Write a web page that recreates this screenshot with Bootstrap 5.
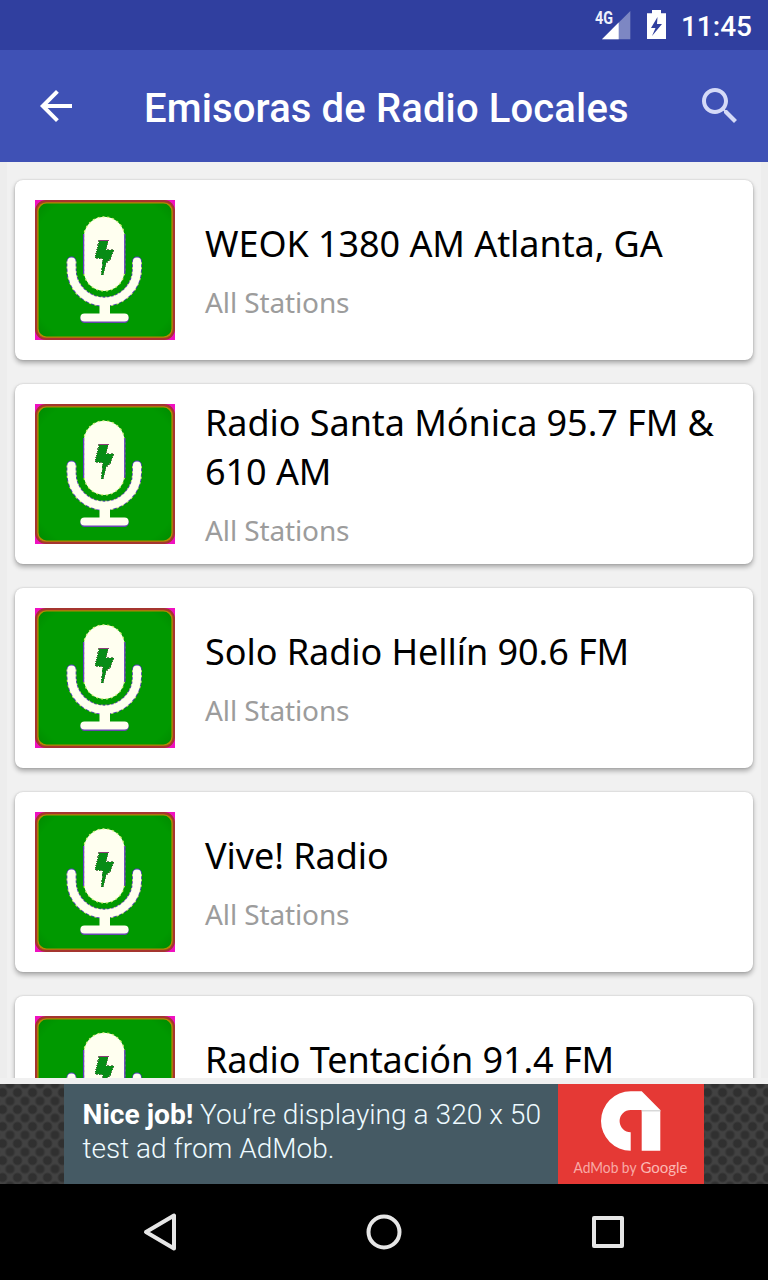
<!DOCTYPE html>
<html lang="es">
<head>
<meta charset="utf-8">
<meta name="viewport" content="width=device-width, initial-scale=1">
<title>Emisoras de Radio Locales</title>
<link href="https://cdn.jsdelivr.net/npm/bootstrap@5.3.0/dist/css/bootstrap.min.css" rel="stylesheet">
<style>
body{font-family:"Noto Sans",sans-serif;background:#f0f0f0}
svg{display:block;flex:none}
.screen{width:768px;height:1280px}
.status{height:50px;background:#303f9f;padding-right:16px}
.clock{font:500 28px/50px Roboto,sans-serif;margin-left:14px;padding-top:2px}
.appbar{height:112px;background:#3f51b5;padding:0 24px 0 32px}
.appbar h1{font:500 40px/56px Roboto,sans-serif;letter-spacing:.13px;margin:6px 0 0 64px;width:552px;white-space:nowrap}
.stations{height:916px;padding:18px 15px 0;gap:24px;background:linear-gradient(90deg,#ededed 7px,#f1f1f1 7px,#f1f1f1 761px,#ededed 761px)}
.station{height:180px;border:0;border-radius:8px;flex:none;padding:0 20px;gap:30px;box-shadow:0 3px 5px rgba(0,0,0,.3),0 0 2px rgba(0,0,0,.18)}
.station h2{font-size:36px;line-height:49px;letter-spacing:-.06px;font-weight:400;color:#000;margin:0 0 15px}
.station p{font-size:28px;line-height:38px;letter-spacing:-.12px;color:#9c9c9c;margin:0}
.twoline{margin-top:-2px}
.ad{height:100px;margin-top:6px;background-color:#424242;
background-image:radial-gradient(circle,#303030 3.5px,transparent 5.5px),radial-gradient(circle,#303030 3.5px,transparent 5.5px);background-size:15px 17px;background-position:-5px 0,2.5px 8.5px}
.admsg{width:494px;background:#455a64}
.adlogo{width:146px;background:#e53935}
.navkeys{height:96px;background:#000}
</style>
</head>
<body>
<svg width="0" height="0" class="position-absolute">
  <defs>
    <radialGradient id="green" r=".75"><stop offset=".8" stop-color="#009900"/><stop offset="1" stop-color="#008500"/></radialGradient>
    <symbol id="mic" viewBox="0 0 140 140">
      <rect width="140" height="140" fill="#f010c0"/>
      <rect width="140" height="140" rx="11" fill="#a5352f"/>
      <rect x="2.2" y="2.2" width="135.600" height="135.600" rx="9" fill="#b08a00"/>
      <rect x="3.6" y="3.6" width="132.800" height="132.800" rx="8" fill="url(#green)"/>
      <g fill="none" stroke-linecap="round">
        <path d="M36.500 61.500v7.500a32.500 32.500 0 0 0 65.500 0v-7.500" stroke="#5a3fc0" stroke-width="9.800"/>
        <path d="M36.500 61.500v7.500a32.500 32.500 0 0 0 65.500 0v-7.500" stroke="#c8f070" stroke-width="9.800" stroke-dasharray="2 3" stroke-linecap="butt"/>
        <path d="M49.500 118.800h40" stroke="#6646b0" stroke-width="8.500"/>
        <path d="M36.500 61.500v7.500a32.500 32.500 0 0 0 65.500 0v-7.500M49.500 117.500h40" stroke="#fffff0" stroke-width="8.200"/>
      </g>
      <path d="M48.800 37.200a20.400 20.400 0 0 1 40.800 0V70.500a20.400 20.400 0 0 1-40.800 0z" fill="#fffff0" stroke="#d8f080" stroke-width="1.300" stroke-dasharray="2 3"/>
      <path d="M48.600 34v40M89.800 34v40" stroke="#6838c8" stroke-width="1.300"/>
      <path d="M64.500 100h10.500v18h-10.500z" fill="#fffff0"/>
      <g shape-rendering="crispEdges">
        <path d="M64 40.500h9.500l-2.500 9 7.700.5-3 9-5 5-2.500 10.500h-2l1.500-15.500-8-1z" fill="#078c16" stroke="#6d8760" stroke-width="1" stroke-dasharray="2 2"/>
        <path d="M64 40.300h9.500" stroke="#8c3c78" stroke-width="1.300"/>
      </g>
    </symbol>
  </defs>
</svg>
<div class="screen d-flex flex-column overflow-hidden">
  <div class="status d-flex justify-content-end text-white">
    <svg width="76" height="50" viewBox="592 0 76 50">
      <text x="596" y="24" font-family="Roboto" font-weight="700" font-size="18" textLength="18" lengthAdjust="spacingAndGlyphs" fill="#eef0fb">4G</text>
      <path d="M631.300 11v28.300H603z" fill="#7d87c3"/>
      <path d="M619.700 22.600v16.700H603z" fill="#fff"/>
      <path fill-rule="evenodd" d="M653 10h9v3.300h5V39h-19V13.300h5zM658.500 17l-6.500 11h4.500L653 36l10-12h-5z" fill="#fff"/>
    </svg>
    <div class="clock">11:45</div>
  </div>
  <header class="appbar d-flex align-items-center text-white">
    <svg width="48" height="48" viewBox="0 0 24 24" fill="#fff"><path d="M20 11H7.830l5.590-5.590L12 4l-8 8 8 8 1.410-1.410L7.830 13H20v-2z"/></svg>
    <h1>Emisoras de Radio Locales</h1>
    <svg width="48" height="48" viewBox="0 0 24 24" fill="#d5daf7"><path d="M15.500 14h-.79l-.28-.27C15.410 12.590 16 11.110 16 9.500 16 5.910 13.090 3 9.500 3S3 5.910 3 9.500 5.910 16 9.500 16c1.610 0 3.090-.59 4.230-1.570l.27.28v.79l5 4.990L20.490 19l-4.990-5zm-6 0C7.010 14 5 11.990 5 9.500S7.010 5 9.500 5 14 7.010 14 9.500 11.990 14 9.500 14z"/></svg>
  </header>
  <main class="stations d-flex flex-column overflow-hidden">
    <div class="card station flex-row align-items-center"><svg width="140" height="140"><use href="#mic"/></svg><div><h2>WEOK 1380 AM Atlanta, GA</h2><p>All Stations</p></div></div>
    <div class="card station flex-row align-items-center"><svg width="140" height="140"><use href="#mic"/></svg><div class="twoline"><h2>Radio Santa Mónica 95.7 FM &amp; 610 AM</h2><p>All Stations</p></div></div>
    <div class="card station flex-row align-items-center"><svg width="140" height="140"><use href="#mic"/></svg><div><h2>Solo Radio Hellín 90.6 FM</h2><p>All Stations</p></div></div>
    <div class="card station flex-row align-items-center"><svg width="140" height="140"><use href="#mic"/></svg><div><h2>Vive! Radio</h2><p>All Stations</p></div></div>
    <div class="card station flex-row align-items-center"><svg width="140" height="140"><use href="#mic"/></svg><div><h2>Radio Tentación 91.4 FM</h2><p>All Stations</p></div></div>
  </main>
  <div class="ad d-flex justify-content-center">
    <div class="admsg">
      <svg width="494" height="100" font-family="Roboto" font-size="28" font-weight="300" fill="#eefaff">
        <text x="18.500" y="40" font-weight="700" fill="#fff" textLength="111" lengthAdjust="spacingAndGlyphs">Nice job!</text>
        <text x="136" y="40" textLength="341" lengthAdjust="spacingAndGlyphs">You’re displaying a 320 x 50</text>
        <text x="18.500" y="73.500" textLength="252" lengthAdjust="spacingAndGlyphs">test ad from AdMob.</text>
      </svg>
    </div>
    <div class="adlogo">
      <svg width="146" height="100">
        <path d="M72.700 7.300h11l18.600 18.700v40.700H83.700V26h-11a11 11 0 0 0 0 22.200v18.500a29.700 29.700 0 0 1 0-59.400z" fill="#fff"/>
        <path d="M83.700 26h18.600v1.500H83.700z" fill="#d8d8d8"/>
        <text x="15.500" y="89" font-family="Lato" font-size="15.500" fill="#f8aaa6" textLength="63" lengthAdjust="spacingAndGlyphs">AdMob by</text>
        <text x="82.500" y="89" font-family="Lato" font-size="15.500" fill="#fbb8b4" textLength="47" lengthAdjust="spacingAndGlyphs">Google</text>
      </svg>
    </div>
  </div>
  <nav class="navkeys d-flex align-items-center justify-content-center">
    <svg width="768" height="96" fill="none" stroke="#e6e6e6" stroke-width="4" stroke-linejoin="round">
      <path d="M146 48l28-16.500v33z"/>
      <circle cx="384" cy="48" r="15.500"/>
      <rect x="594" y="34" width="28" height="28"/>
    </svg>
  </nav>
</div>
<script src="https://cdn.jsdelivr.net/npm/bootstrap@5.3.0/dist/js/bootstrap.bundle.min.js"></script>
</body>
</html>
